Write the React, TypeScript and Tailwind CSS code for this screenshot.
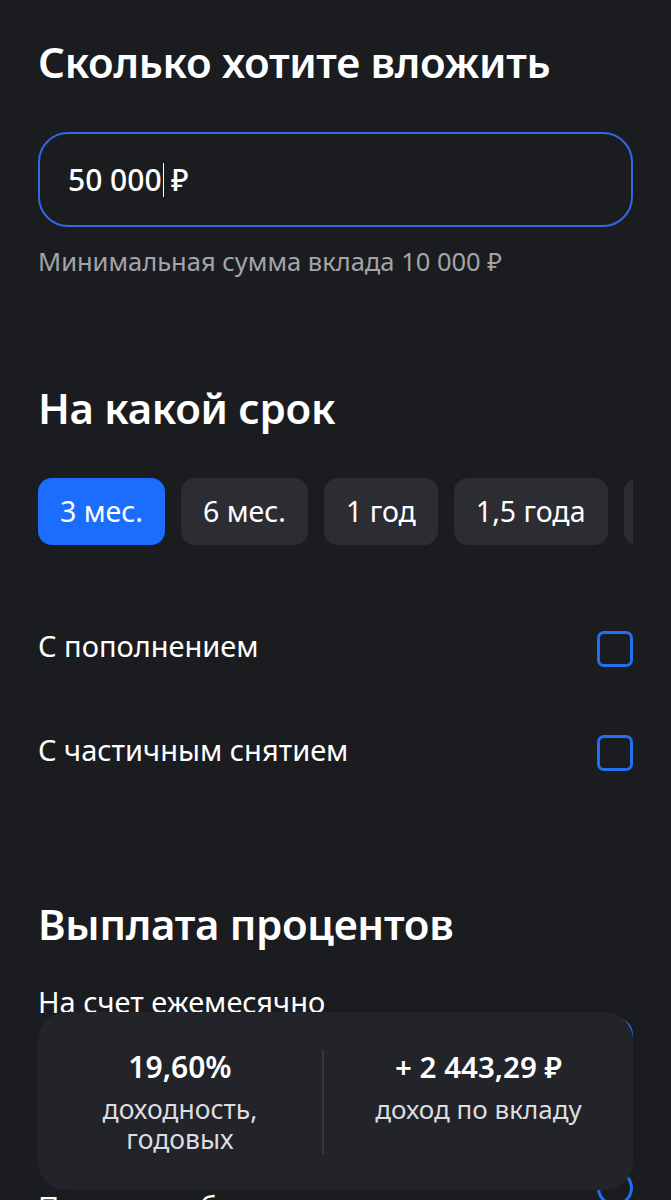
import React from 'react';

const terms = ['3 мес.', '6 мес.', '1 год', '1,5 года', '2 года', '3 года'];

function Checkbox() {
  return <div className="w-[36px] h-[36px] rounded-[7px] border-[3px] border-[#1f6ff0] shrink-0" />;
}

function Radio({ checked }: { checked?: boolean }) {
  return (
    <div
      className={
        checked
          ? 'w-[36px] h-[36px] rounded-full border-[3px] border-[#1f6ff0] flex items-center justify-center shrink-0'
          : 'w-[36px] h-[36px] rounded-full border-[3px] border-[#1f6ff0] shrink-0'
      }
    >
      {checked && <div className="w-[16px] h-[16px] rounded-full bg-[#1f6ff0]" />}
    </div>
  );
}

export default function App() {
  return (
    <div
      className="relative w-[671px] h-[1200px] overflow-hidden bg-[#1b1c20] text-white"
      style={{ fontFamily: '"Noto Sans", "Open Sans", sans-serif' }}
    >
      <div className="px-[38px] pt-[38px]">
        <h1 className="text-[42px] leading-[48px] font-semibold tracking-[-0.3px]">Сколько хотите вложить</h1>

        {/* amount input */}
        <div className="mt-[46px] h-[95px] rounded-[30px] border-2 border-[#2d6be4] flex items-center px-[28px]">
          <span className="text-[30px] font-medium">50 000</span>
          <span className="w-[1.5px] h-[34px] bg-white mx-[1px]" />
          <span className="text-[30px] font-medium ml-[6px]">₽</span>
        </div>
        <p className="mt-[18px] text-[25.5px] leading-[32px] text-[#a3a4a9]">Минимальная сумма вклада 10 000 ₽</p>

        <h2 className="mt-[107px] text-[42px] leading-[48px] font-semibold tracking-[-0.3px]">На какой срок</h2>

        {/* term chips */}
        <div className="mt-[46px] flex gap-[16px] overflow-hidden">
          {terms.map((t, i) => (
            <div
              key={t}
              className={
                i === 0
                  ? 'h-[67px] px-[22px] rounded-[14px] bg-[#1a6dfd] flex items-center text-[28.5px] whitespace-nowrap shrink-0'
                  : 'h-[67px] px-[22px] rounded-[14px] bg-[#2c2d32] flex items-center text-[28.5px] whitespace-nowrap shrink-0'
              }
            >
              {t}
            </div>
          ))}
        </div>

        <div className="mt-[52px]">
          <div className="h-[104px] flex items-center justify-between">
            <span className="text-[29px] -mt-[6px]">С пополнением</span>
            <Checkbox />
          </div>
          <div className="h-[104px] flex items-center justify-between">
            <span className="text-[29px] -mt-[6px]">С частичным снятием</span>
            <Checkbox />
          </div>
        </div>

        <h2 className="mt-[95px] text-[42px] leading-[48px] font-semibold tracking-[-0.3px]">Выплата процентов</h2>

        <div className="mt-[36px] flex justify-between">
          <div>
            <p className="text-[29px] leading-[36px]">На счет ежемесячно</p>
            <p className="mt-[8px] text-[24px] leading-[30px] text-[#a3a4a9]">Проценты будут приходить на счет</p>
          </div>
          <div className="mt-[33px]">
            <Radio checked />
          </div>
        </div>
        <div className="mt-[112px] flex justify-between">
          <p className="mt-[19px] text-[29px] leading-[36px]">Пополнять баланс</p>
          <Radio />
        </div>
      </div>

      {/* sticky summary */}
      <div className="absolute left-[38px] top-[1012px] w-[595px] h-[178px] rounded-[28px] bg-[#222429] flex items-start pt-[35px]">
        <div className="w-[284px] flex flex-col items-center">
          <span className="text-[30px] leading-[40px] font-semibold">19,60%</span>
          <span className="mt-[7px] text-[26.5px] leading-[30px] text-[#dcdde0] text-center">
            доходность,
            <br />
            годовых
          </span>
        </div>
        <div className="w-[2px] h-[104px] mt-[3px] bg-[#36383d]" />
        <div className="flex-1 flex flex-col items-center">
          <span className="text-[29.5px] leading-[40px] font-semibold">+ 2 443,29 ₽</span>
          <span className="mt-[7px] text-[26px] leading-[30px] text-[#dcdde0]">доход по вкладу</span>
        </div>
      </div>
    </div>
  );
}
